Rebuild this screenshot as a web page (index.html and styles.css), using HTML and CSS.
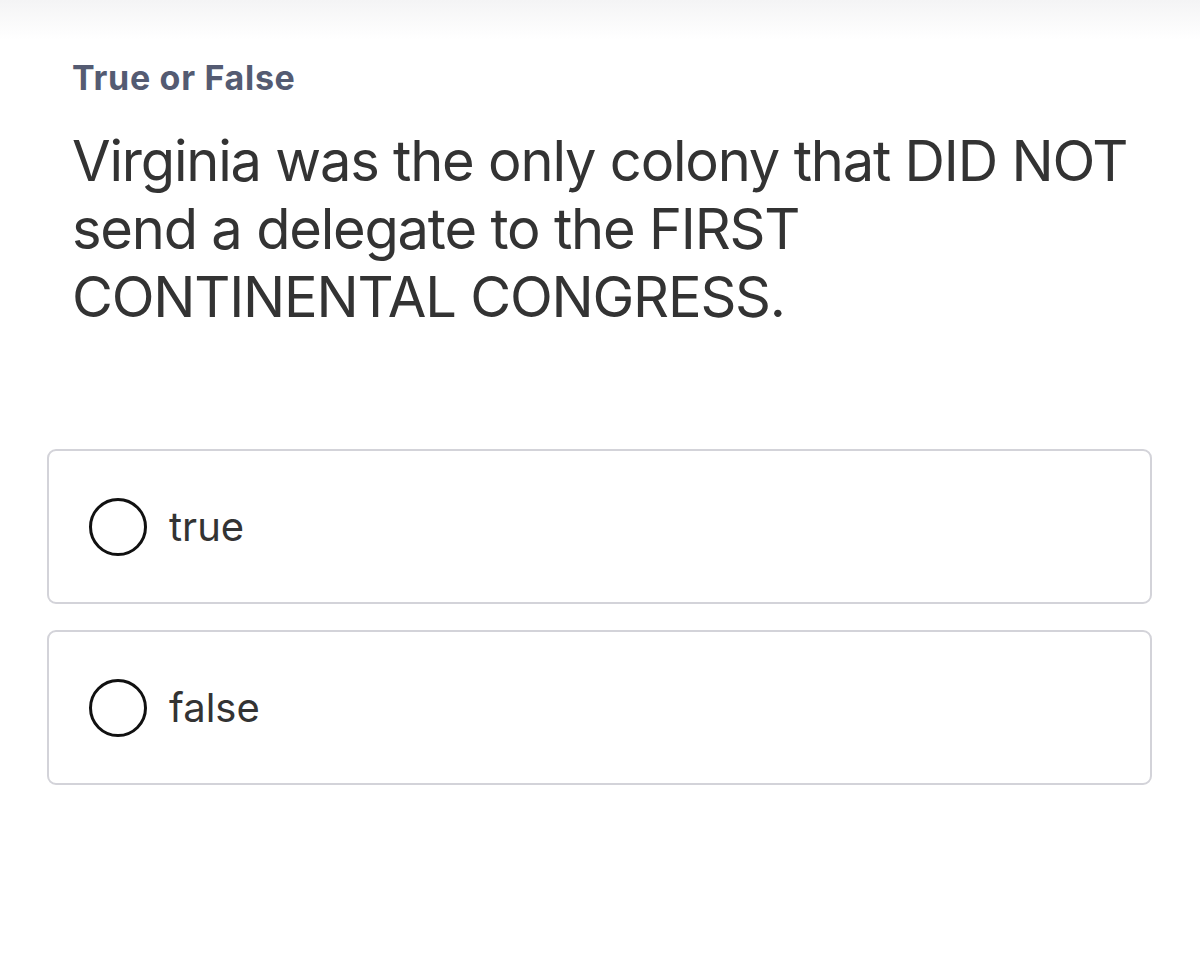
FILE: index.html
```html
<!DOCTYPE html>
<html lang="en">
<head>
<meta charset="utf-8">
<title>True or False</title>
<link rel="stylesheet" href="styles.css">
</head>
<body>
<div class="topbar"></div>
<main class="page">
  <div class="kind">True or False</div>
  <h1 class="question">Virginia was the only colony that DID NOT send a delegate to the FIRST CONTINENTAL CONGRESS.</h1>
  <div class="options">
    <label class="option">
      <span class="radio"></span>
      <span class="option-text">true</span>
    </label>
    <label class="option">
      <span class="radio"></span>
      <span class="option-text">false</span>
    </label>
  </div>
</main>
</body>
</html>
```
FILE: styles.css
```css
html, body {
  margin: 0;
  padding: 0;
  background: #ffffff;
}
body {
  font-family: Inter, "Noto Sans", "Liberation Sans", sans-serif;
  width: 1200px;
  height: 962px;
  overflow: hidden;
}
.topbar {
  height: 40px;
  background: linear-gradient(#f4f4f5, #ffffff);
}
.page {
  padding: 0 48px 0 47px;
}
.kind {
  padding-left: 25px;
  margin-top: 18px;
  font-size: 34px;
  line-height: 40px;
  font-weight: 700;
  letter-spacing: 0.7px;
  color: #545b72;
}
.question {
  margin: 29px 0 0;
  padding-left: 25px;
  font-size: 56px;
  line-height: 68px;
  font-weight: 400;
  color: #333333;
  letter-spacing: -1.2px;
}
.options {
  margin-top: 118px;
  display: flex;
  flex-direction: column;
  gap: 26px;
}
.option {
  box-sizing: border-box;
  height: 155px;
  border: 2px solid #d3d3d9;
  border-radius: 9px;
  display: flex;
  align-items: center;
  padding-left: 40px;
  gap: 22px;
}
.radio {
  width: 52px;
  height: 52px;
  border: 3px solid #111111;
  border-radius: 50%;
  flex: none;
}
.option-text {
  font-size: 40px;
  color: #333333;
}
```
